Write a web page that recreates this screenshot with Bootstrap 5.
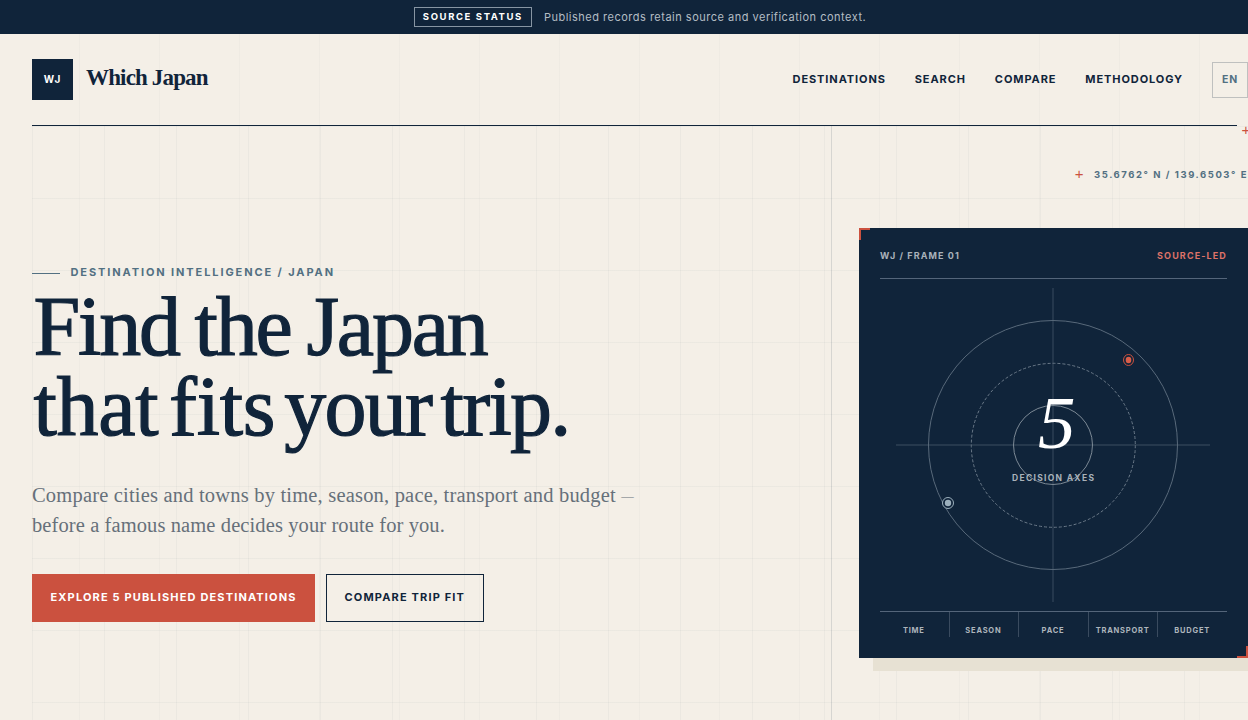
<!DOCTYPE html>
<html lang="en">
<head>
<meta charset="utf-8">
<meta name="viewport" content="width=device-width, initial-scale=1">
<title>Which Japan</title>
<link href="https://cdn.jsdelivr.net/npm/bootstrap@5.3.0/dist/css/bootstrap.min.css" rel="stylesheet">
<style>
:root{--ink:#10243a;--paper:#f4efe7;--vermilion:#cb513f;--slate:#527082}
html,body{overflow:hidden;height:100%}
body{font-family:Inter,sans-serif;color:var(--ink);background:var(--paper)}
.page{width:1280px;min-height:720px;background:repeating-linear-gradient(90deg,transparent 0 79px,rgba(16,36,58,.025) 79px 80px)}
.serif{font-family:"Liberation Serif",serif}
.status{height:34px;background:var(--ink);gap:12px;font-size:11px;letter-spacing:.5px;color:#b4bdc4}
.status-tag{border:1px solid #8795a3;color:#fff;font-weight:700;font-size:9.5px;letter-spacing:1.6px;padding:0 8px;height:20px;line-height:18px}
.shell{margin:0 32px}
.masthead{height:92px;padding-bottom:1px;background:linear-gradient(var(--ink),var(--ink)) 0 100%/1205px 1px no-repeat}
.plus-mark{font-family:"Liberation Sans",sans-serif;color:var(--vermilion);font-size:15px;font-weight:400;line-height:20px;letter-spacing:0}
.plus-end{left:1209.5px;top:86px}
.monogram{width:41px;height:41px;background:var(--ink);color:#fff;font-size:10px;font-weight:700;letter-spacing:1px}
.wordmark{font-size:23px;font-weight:700;letter-spacing:-.85px;margin-left:13px;line-height:30px;padding-bottom:4px}
.menu{gap:29px;font-size:11px;font-weight:700;letter-spacing:.9px}
.menu a{color:var(--ink);text-decoration:none}
.menu .lang{width:36px;height:36px;border:1px solid #bfc0bf;color:var(--slate);font-size:10.5px}
.hero{height:594px;background:
 linear-gradient(rgba(16,36,58,.035) 1px,transparent 1px) 0 0/72px 72px,
 linear-gradient(90deg,rgba(16,36,58,.035) 1px,transparent 1px) 0 0/72px 72px}
.copy{width:800px;padding-top:138px;border-right:1px solid rgba(16,36,58,.13)}
.eyebrow{height:16px;gap:10.5px;font-size:11px;font-weight:700;letter-spacing:1.9px;color:var(--slate);margin-bottom:7px}
.eyebrow::before{content:"";width:28px;height:1px;background:var(--slate);margin-top:2px}
.headline{font-size:84px;line-height:80px;font-weight:400;margin:0 0 33px 1.5px;-webkit-text-stroke:1.2px var(--ink)}
.headline>span{display:block;letter-spacing:-2.2px;word-spacing:-3px}
.headline>span+span{letter-spacing:-1.75px;word-spacing:-10px}
.headline .loose{letter-spacing:-.3px}
.lede{font-size:20.5px;line-height:30px;color:#66707a;margin:0 0 34px;white-space:nowrap;letter-spacing:.1px}
.lede .long-line{letter-spacing:.19px}
.lede .dash{font-size:12.5px;line-height:0;vertical-align:2.5px}
.actions{gap:11px}
.actions .btn{height:48px;border-radius:0;font-size:11px;font-weight:700;letter-spacing:1.15px;padding:0 17.5px;line-height:44px;border:1px solid var(--ink);color:var(--ink)}
.actions .btn-go{background:var(--vermilion);border-color:var(--vermilion);color:#fff}
.visual{width:389px;margin-left:27px}
.coords{height:102px;padding-top:39px;gap:10.5px;font-size:9.5px;font-weight:700;letter-spacing:1.55px;line-height:20px;color:var(--slate);white-space:nowrap}
.coords .plus-mark{margin-top:-1px}
.frame{height:430px;background:var(--ink);padding:21px;box-shadow:14px 13px 0 #e7e1d3}
.frame::before,.frame::after{content:"";position:absolute;width:11px;height:12px;border:0 solid var(--vermilion)}
.frame::before{left:0;top:0;border-width:2px 0 0 2px}
.frame::after{right:0;bottom:0;border-width:0 2px 2px 0}
.frame-head{height:30px;border-bottom:1px solid #54657a;font-size:9px;font-weight:700;letter-spacing:1.1px;line-height:14px;color:#a9b2ba}
.frame-head .led{color:#dd7268;letter-spacing:1.12px}
.radar{display:block;width:314px;height:314px;margin:9px 16px}
.axes{border-top:1px solid #54657a;height:26px;font-size:7.5px;font-weight:700;letter-spacing:.78px;color:#adb5bc}
.axes>div{flex:1 1 0;min-width:0;padding-top:11px;line-height:15px;text-align:center;text-indent:-1px;border-right:1px solid #3a4b5f}
.axes>div:last-child{border-right:0}
</style>
<script src="https://cdn.jsdelivr.net/npm/bootstrap@5.3.0/dist/js/bootstrap.bundle.min.js"></script>
</head>
<body>
<div class="page">
  <div class="status d-flex align-items-center justify-content-center">
    <span class="status-tag">SOURCE STATUS</span>
    <span>Published records retain source and verification context.</span>
  </div>
  <div class="shell">
    <header class="masthead d-flex align-items-center justify-content-between position-relative">
      <div class="d-flex align-items-center">
        <div class="monogram d-flex align-items-center justify-content-center">WJ</div>
        <span class="wordmark serif">Which Japan</span>
      </div>
      <nav class="menu d-flex align-items-center">
        <a href="#">DESTINATIONS</a><a href="#">SEARCH</a><a href="#">COMPARE</a><a href="#">METHODOLOGY</a>
        <a href="#" class="lang d-flex align-items-center justify-content-center">EN</a>
      </nav>
      <span class="plus-mark plus-end position-absolute">+</span>
    </header>
    <main class="hero d-flex">
      <section class="copy">
        <div class="eyebrow d-flex align-items-center">DESTINATION INTELLIGENCE / JAPAN</div>
        <h1 class="headline serif"><span>Find the Japan</span><span><span class="loose">that fits</span> your trip.</span></h1>
        <p class="lede serif"><span class="long-line">Compare cities and towns by time, season, pace, transport and budget <span class="dash">—</span></span><br>before a famous name decides your route for you.</p>
        <div class="actions d-flex">
          <a class="btn btn-go" href="#">EXPLORE 5 PUBLISHED DESTINATIONS</a>
          <a class="btn" href="#">COMPARE TRIP FIT</a>
        </div>
      </section>
      <section class="visual">
        <div class="coords d-flex justify-content-end"><span class="plus-mark">+</span><span>35.6762° N / 139.6503° E</span></div>
        <div class="frame position-relative">
          <div class="frame-head d-flex justify-content-between"><span>WJ / FRAME 01</span><span class="led">SOURCE-LED</span></div>
          <svg class="radar" viewBox="0 0 314 314" fill="none">
            <path d="M0 157H314M157 0V314" stroke="#2e4054" stroke-width="1.4"/>
            <circle cx="157" cy="157" r="124.5" stroke="#58697a"/>
            <circle cx="157.300" cy="157.300" r="82" stroke="#6b7a89" stroke-dasharray="3 2"/>
            <circle cx="157" cy="157" r="39.5" stroke="#7c8995"/>
            <ellipse cx="232.5" cy="72" rx="5" ry="5.5" stroke="#cb513f"/><ellipse cx="232.5" cy="72" rx="2.8" ry="3.2" fill="#d95e49"/>
            <circle cx="52" cy="215" r="5.5" fill="#10243a" stroke="#9cb0bd"/><circle cx="52" cy="215" r="3.2" fill="#9cb0bd"/>
            <text x="142" y="159.500" font-family="Liberation Serif, serif" font-style="italic" font-size="75" fill="#fff">5</text>
            <text x="116" y="193" textLength="82" font-family="Inter, sans-serif" font-size="8.500" font-weight="700" fill="#a9b2ba">DECISION AXES</text>
          </svg>
          <div class="axes d-flex"><div>TIME</div><div>SEASON</div><div>PACE</div><div>TRANSPORT</div><div>BUDGET</div></div>
        </div>
      </section>
    </main>
  </div>
</div>
</body>
</html>
